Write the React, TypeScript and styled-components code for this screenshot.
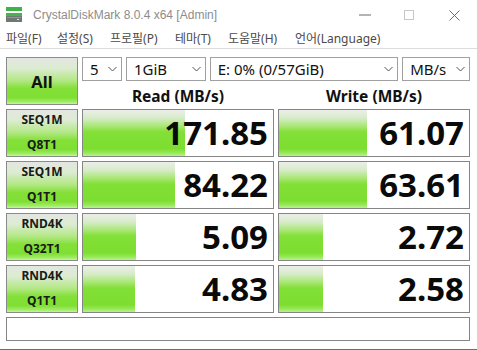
import React from "react";
import styled, { createGlobalStyle } from "styled-components";

const Global = createGlobalStyle`
  html, body { margin: 0; padding: 0; background: #fff; }
  body { width: 477px; height: 350px; overflow: hidden; font-family: "Noto Sans", "Noto Sans CJK KR", sans-serif; }
  * { box-sizing: border-box; }
`;

const Window = styled.div`
  width: 477px;
  height: 350px;
  display: flex;
  flex-direction: column;
  background: #fff;
  border-bottom: 1px solid #4a7a96;
`;

const TitleBar = styled.div`
  height: 30px;
  display: flex;
  align-items: center;
  padding-left: 6px;
`;

const TitleText = styled.span`
  margin-left: 10px;
  font-family: "Liberation Sans", Arial, sans-serif;
  font-size: 12px;
  color: #8c8c8c;
  flex: 1;
  line-height: 30px;
`;

const Controls = styled.div`
  display: flex;
  height: 30px;
`;

const ControlBtn = styled.div<{ $w: number }>`
  width: ${(p) => p.$w}px;
  height: 30px;
  display: flex;
  align-items: center;
  justify-content: center;
`;

const MenuBar = styled.div`
  height: 18px;
  display: flex;
  align-items: center;
  padding-left: 6px;
  border-bottom: 1px solid #dcdcdc;
  box-sizing: content-box;
`;

const MenuItem = styled.span<{ $w: number }>`
  width: ${(p) => p.$w}px;
  font-size: 12px;
  color: #4a4a4a;
  white-space: nowrap;
  line-height: 18px;
`;

const Main = styled.div`
  padding: 8px 0 0 6px;
  display: grid;
  grid-template-columns: 72px 192px 192px;
  grid-auto-rows: 48px;
  gap: 4px;
`;

const greenBtn = `
  background: linear-gradient(to bottom, #e4e6e2 0%, #dcecd2 22%, #b4e888 48%, #84e038 66%, #7fdf32 86%, #a4ee6c 96%, #c6f5a2 100%);
  border: 1px solid #8a8a8a;
`;

const AllButton = styled.div`
  ${greenBtn}
  display: flex;
  align-items: center;
  justify-content: center;
  font-weight: 700;
  font-size: 16.5px;
  color: #111;
`;

const TopRight = styled.div`
  grid-column: 2 / span 2;
  display: flex;
  flex-direction: column;
`;

const ComboRow = styled.div`
  display: flex;
  height: 24px;
`;

const Combo = styled.div<{ $w: number; $ml: number }>`
  width: ${(p) => p.$w}px;
  margin-left: ${(p) => p.$ml}px;
  height: 24px;
  border: 1px solid #a0a0a0;
  background: #fff;
  display: flex;
  align-items: center;
  padding: 0 4px 0 7px;
  font-size: 15px;
  color: #111;
`;

const ComboText = styled.span`
  flex: 1;
  line-height: 22px;
  white-space: nowrap;
`;

const HeaderRow = styled.div`
  display: grid;
  grid-template-columns: 192px 192px;
  gap: 4px;
  height: 24px;
`;

const Header = styled.div`
  text-align: center;
  font-weight: 700;
  font-size: 15.5px;
  line-height: 20px;
  padding-top: 5px;
  color: #111;
`;

const Label = styled.div`
  ${greenBtn}
  display: flex;
  flex-direction: column;
  align-items: center;
  justify-content: center;
  font-weight: 700;
  font-size: 12px;
  line-height: 25px;
  color: #1a1a1a;
  padding-bottom: 3px;
`;

const ResultBox = styled.div`
  position: relative;
  border: 1px solid #858585;
  background: #fff;
  overflow: hidden;
`;

const Bar = styled.div`
  position: absolute;
  left: 0;
  top: 0;
  bottom: 0;
  background: linear-gradient(to bottom, #eceeea 0%, #d6ecc6 18%, #a6e670 36%, #82e036 48%, #7ddd30 84%, #96e956 93%, #b8f290 100%);
`;

const Value = styled.div`
  position: relative;
  text-align: right;
  font-weight: 700;
  font-size: 33px;
  line-height: 46px;
  padding-right: 5px;
  color: #0a0a0a;
`;

const Comment = styled.div`
  grid-column: 1 / span 3;
  height: 24px;
  border: 1px solid #858585;
  background: #fff;
  margin-right: 0;
`;

const Chevron = () => (
  <svg width="9" height="6" viewBox="0 0 9 6">
    <polyline points="0.5,1 4.5,5 8.5,1" fill="none" stroke="#555" strokeWidth="1" />
  </svg>
);

const AppIcon = () => (
  <svg width="17" height="17" viewBox="0 0 17 17">
    <rect x="0" y="0" width="16" height="4" fill="#3fb34a" />
    <rect x="0" y="6" width="16" height="3" fill="#4caf50" />
    <rect x="0" y="9" width="16" height="6" fill="#6d7a72" />
    <rect x="1" y="10" width="14" height="1" fill="#8e9a92" />
    <rect x="11" y="12" width="2" height="1" fill="#dfe7e1" />
  </svg>
);

const rows = [
  { l1: "SEQ1M", l2: "Q8T1", r: "171.85", rw: 102, w: "61.07", ww: 88 },
  { l1: "SEQ1M", l2: "Q1T1", r: "84.22", rw: 92, w: "63.61", ww: 88 },
  { l1: "RND4K", l2: "Q32T1", r: "5.09", rw: 53, w: "2.72", ww: 44 },
  { l1: "RND4K", l2: "Q1T1", r: "4.83", rw: 52, w: "2.58", ww: 44 },
];

const menus: [string, number][] = [
  ["파일(F)", 51],
  ["설정(S)", 53],
  ["프로필(P)", 65],
  ["테마(T)", 53],
  ["도움말(H)", 67],
  ["언어(Language)", 100],
];

export default function App() {
  return (
    <>
      <Global />
      <Window>
        <TitleBar>
          <AppIcon />
          <TitleText>CrystalDiskMark 8.0.4 x64 [Admin]</TitleText>
          <Controls>
            <ControlBtn $w={45}>
              <svg width="12" height="2" viewBox="0 0 12 2">
                <line x1="0" y1="1" x2="12" y2="1" stroke="#6a6a6a" strokeWidth="1" />
              </svg>
            </ControlBtn>
            <ControlBtn $w={45}>
              <svg width="11" height="11" viewBox="0 0 11 11">
                <rect x="0.5" y="0.5" width="9" height="9" fill="none" stroke="#c8c8c8" strokeWidth="1" />
              </svg>
            </ControlBtn>
            <ControlBtn $w={45}>
              <svg width="11" height="11" viewBox="0 0 11 11">
                <line x1="0.5" y1="0.5" x2="10.5" y2="10.5" stroke="#6a6a6a" strokeWidth="1" />
                <line x1="10.5" y1="0.5" x2="0.5" y2="10.5" stroke="#6a6a6a" strokeWidth="1" />
              </svg>
            </ControlBtn>
          </Controls>
        </TitleBar>
        <MenuBar>
          {menus.map(([m, w]) => (
            <MenuItem key={m} $w={w}>{m}</MenuItem>
          ))}
        </MenuBar>
        <Main>
          <AllButton>All</AllButton>
          <TopRight>
            <ComboRow>
              <Combo $w={40} $ml={0}><ComboText>5</ComboText><Chevron /></Combo>
              <Combo $w={80} $ml={4}><ComboText>1GiB</ComboText><Chevron /></Combo>
              <Combo $w={189} $ml={4}><ComboText>E: 0% (0/57GiB)</ComboText><Chevron /></Combo>
              <Combo $w={68} $ml={4}><ComboText>MB/s</ComboText><Chevron /></Combo>
            </ComboRow>
            <HeaderRow>
              <Header>Read (MB/s)</Header>
              <Header>Write (MB/s)</Header>
            </HeaderRow>
          </TopRight>
          {rows.map((r) => (
            <React.Fragment key={r.l1 + r.l2}>
              <Label>
                <span>{r.l1}</span>
                <span>{r.l2}</span>
              </Label>
              <ResultBox>
                <Bar style={{ width: r.rw }} />
                <Value>{r.r}</Value>
              </ResultBox>
              <ResultBox>
                <Bar style={{ width: r.ww }} />
                <Value>{r.w}</Value>
              </ResultBox>
            </React.Fragment>
          ))}
          <Comment />
        </Main>
      </Window>
    </>
  );
}
